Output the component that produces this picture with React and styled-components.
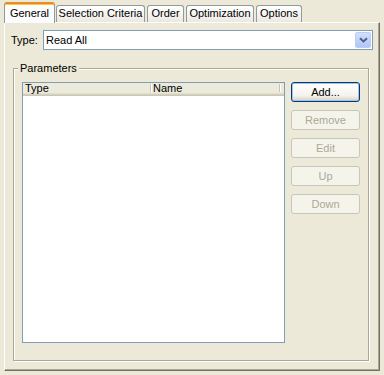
import styled, { createGlobalStyle } from "styled-components";

const GlobalStyle = createGlobalStyle`
  html, body {
    margin: 0;
    padding: 0;
    background: #ece9d8;
  }
  body {
    font-family: "Liberation Sans", Arial, sans-serif;
    font-size: 11px;
    color: #000;
  }
  * {
    box-sizing: border-box;
  }
`;

const tabs = [
  { label: "General", width: 51, active: true },
  { label: "Selection Criteria", width: 89, gap: 1 },
  { label: "Order", width: 37, gap: 2 },
  { label: "Optimization", width: 68, gap: 2 },
  { label: "Options", width: 46, gap: 2 },
];

const buttons = [
  { label: "Add...", primary: true },
  { label: "Remove", disabled: true },
  { label: "Edit", disabled: true },
  { label: "Up", disabled: true },
  { label: "Down", disabled: true },
];

function App() {
  return (
    <Window>
      <GlobalStyle />
      <TabStrip>
        {tabs.map((t) => (
          <Tab key={t.label} $active={t.active} $width={t.width} $gap={t.gap || 0}>
            {t.label}
          </Tab>
        ))}
      </TabStrip>
      <Panel>
        <TypeRow>
          <Label>Type:</Label>
          <Combo>
            <ComboText>Read All</ComboText>
            <DropButton>
              <svg width="9" height="6" viewBox="0 0 9 6">
                <path d="M1 1.2 L4.5 4.4 L8 1.2" fill="none" stroke="#4d6185" strokeWidth="2" />
              </svg>
            </DropButton>
          </Combo>
        </TypeRow>
        <Group>
          <Legend>Parameters</Legend>
          <ListView>
            <Header>
              <HeaderCell $width={128}>Type</HeaderCell>
              <HeaderCell $width={129}>Name</HeaderCell>
              <HeaderFill />
            </Header>
          </ListView>
          <ButtonColumn>
            {buttons.map((b) => (
              <Button key={b.label} $primary={b.primary} disabled={b.disabled}>
                {b.label}
              </Button>
            ))}
          </ButtonColumn>
        </Group>
      </Panel>
    </Window>
  );
}

const Window = styled.div`
  width: 384px;
  height: 375px;
  padding: 2px 4px 4px 4px;
  display: flex;
  flex-direction: column;
`;

const TabStrip = styled.div`
  display: flex;
  align-items: flex-start;
  height: 20px;
  flex: none;
`;

const Tab = styled.div`
  flex: none;
  width: ${(p) => p.$width}px;
  margin-left: ${(p) => p.$gap}px;
  margin-top: ${(p) => (p.$active ? 0 : 3)}px;
  height: ${(p) => (p.$active ? 21 : 17)}px;
  border: 1px solid #919b9c;
  border-bottom: none;
  border-radius: 3px 3px 0 0;
  text-align: center;
  line-height: ${(p) => (p.$active ? 19 : 15)}px;
  white-space: nowrap;
  position: relative;
  z-index: ${(p) => (p.$active ? 1 : 0)};
  background: ${(p) =>
    p.$active ? "#fcfcfe" : "linear-gradient(#ffffff, #f3f2ee 60%, #e9e8e1)"};
  ${(p) =>
    p.$active &&
    `
    border-top: 2px solid #e68b2c;
    box-shadow: inset 0 1px 0 #ffc73c;
  `}
`;

const Panel = styled.div`
  flex: 1;
  min-height: 0;
  display: flex;
  flex-direction: column;
  border: 1px solid #fff;
  border-right-color: #716f64;
  border-bottom-color: #716f64;
  box-shadow: inset -1px -1px 0 #aca899;
  padding: 7px 6px 9px 6px;
`;

const TypeRow = styled.div`
  display: flex;
  align-items: center;
  height: 20px;
  flex: none;
`;

const Label = styled.span`
  width: 32px;
  flex: none;
`;

const Combo = styled.div`
  flex: 1;
  height: 20px;
  display: flex;
  align-items: center;
  border: 1px solid #7f9db9;
  background: #fff;
  padding: 0 1px 0 1px;
`;

const ComboText = styled.span`
  flex: 1;
  padding-left: 1px;
`;

const DropButton = styled.div`
  width: 16px;
  height: 16px;
  display: flex;
  align-items: center;
  justify-content: center;
  border: 1px solid #bacdf5;
  border-radius: 2px;
  background: linear-gradient(#d2e0fd, #bccffb 60%, #b0c6f7);
`;

const Group = styled.div`
  flex: 1;
  min-height: 0;
  position: relative;
  margin: 18px 4px 0 2px;
  padding: 13px 8px 17px 8px;
  border: 1px solid #aca899;
  box-shadow: 1px 1px 0 #fff, inset 1px 1px 0 #fff;
  display: flex;
  gap: 6px;
`;

const Legend = styled.span`
  position: absolute;
  top: -7px;
  left: 4px;
  padding: 0 2px;
  line-height: 13px;
  background: #ece9d8;
`;

const ListView = styled.div`
  flex: 1;
  border: 1px solid #7f9db9;
  background: #fff;
`;

const Header = styled.div`
  display: flex;
  height: 13px;
  background: #ebeadb;
  box-shadow: inset 0 -1px 0 #cbc7b8, inset 0 -2px 0 #d6d2c2, inset 0 -3px 0 #e2decd;
`;

const HeaderCell = styled.div`
  width: ${(p) => p.$width}px;
  flex: none;
  padding-left: 2px;
  line-height: 11px;
  position: relative;

  &::after {
    content: "";
    position: absolute;
    right: 0;
    top: 1px;
    height: 8px;
    width: 1px;
    background: #c7c5b2;
    box-shadow: 1px 0 0 #fff;
  }
`;

const HeaderFill = styled.div`
  flex: 1;
`;

const ButtonColumn = styled.div`
  width: 69px;
  flex: none;
  display: flex;
  flex-direction: column;
  gap: 8px;
`;

const Button = styled.button`
  height: 20px;
  padding: 0;
  font-family: inherit;
  font-size: 11px;
  border-radius: 3px;
  border: 1px solid ${(p) => (p.disabled ? "#c9c7ba" : "#003c74")};
  color: ${(p) => (p.disabled ? "#aca899" : "#000")};
  background: ${(p) =>
    p.disabled ? "#f5f4ea" : "linear-gradient(#ffffff, #f4f3ee 70%, #d6d0c5)"};
  ${(p) => p.$primary && `box-shadow: inset 0 0 0 1px #a7c2ea;`}
`;

export default App;
